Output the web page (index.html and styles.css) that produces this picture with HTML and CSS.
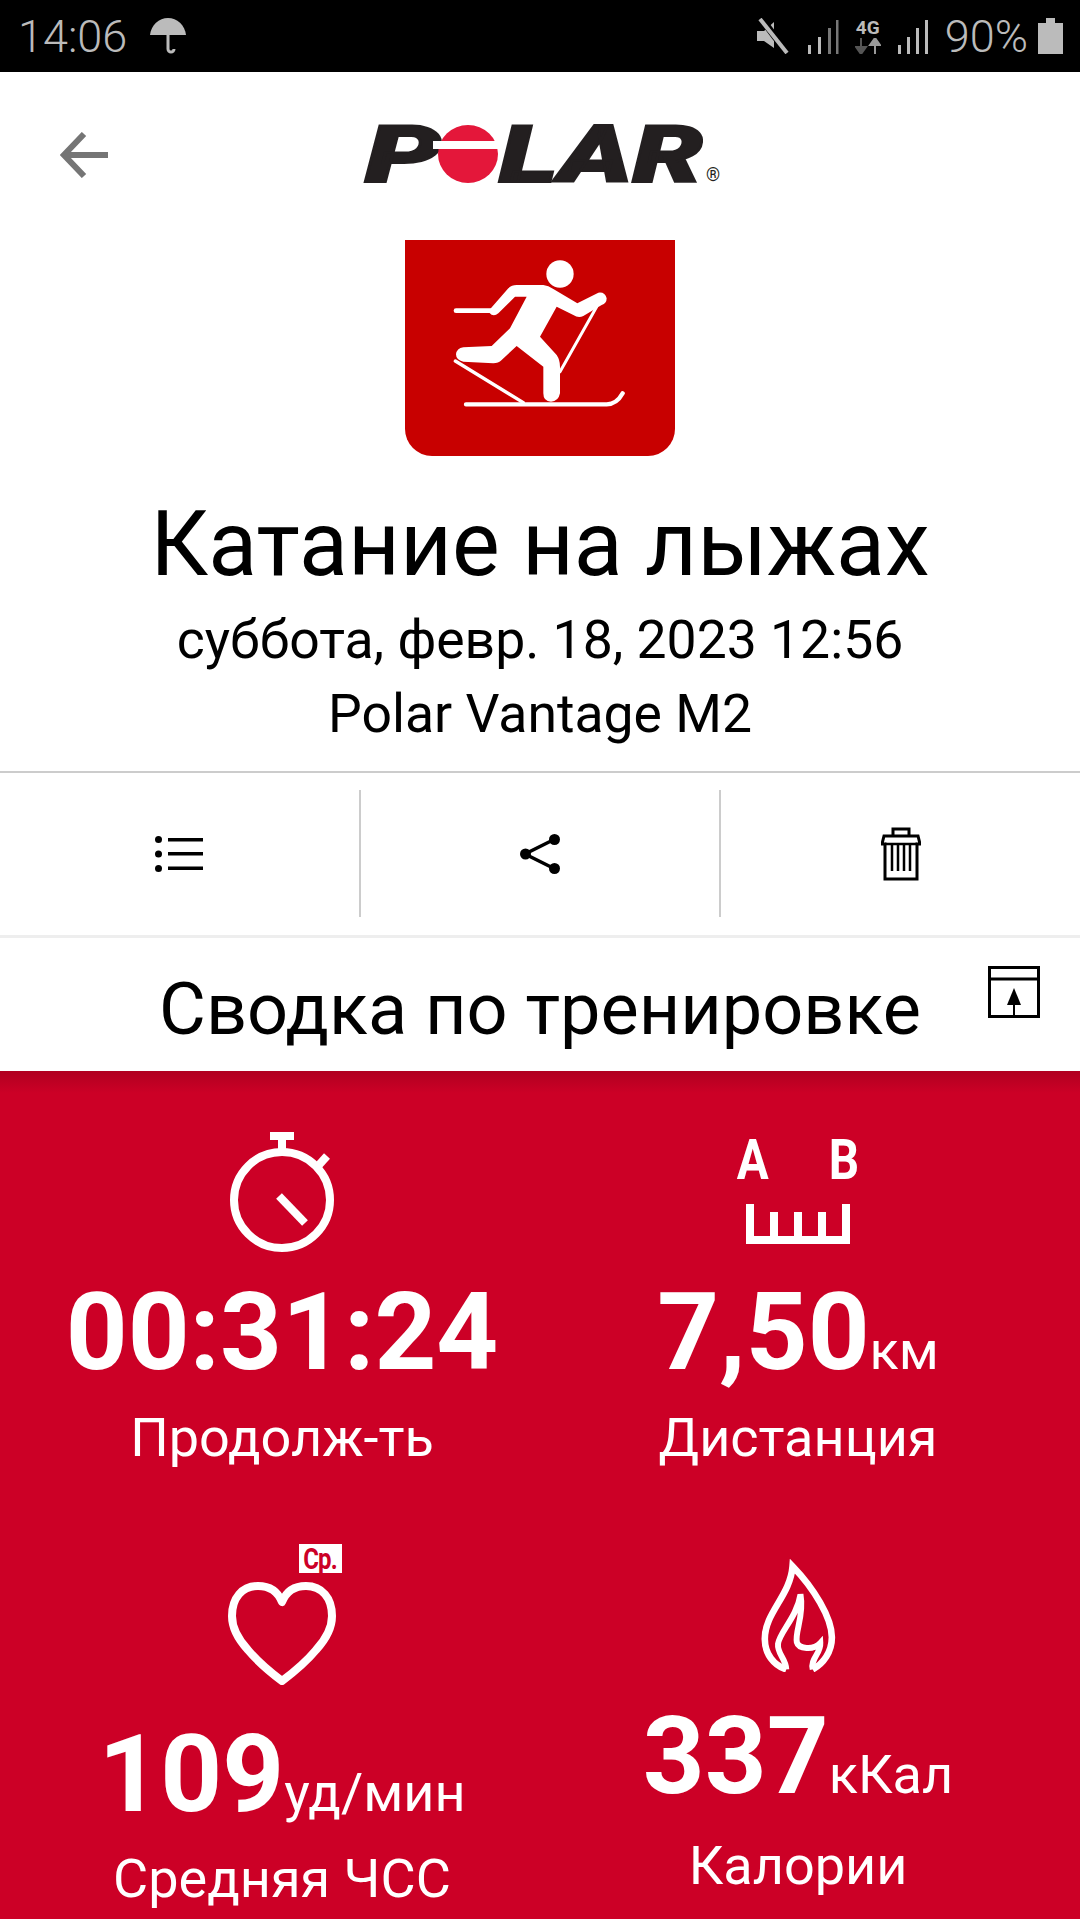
FILE: index.html
```html
<!DOCTYPE html>
<html lang="ru">
<head>
  <meta charset="UTF-8">
  <title>Polar Flow</title>
  <link rel="stylesheet" href="styles.css">
</head>
<body>
  <!--STATUS BAR-->
  <div class="statusbar">
    <div class="status-left">
      <span class="clock">14:06</span>
      <svg class="umbrella" width="36" height="36" viewBox="0 0 36 36">
        <path d="M0 17C1 7 9 0 18 0s17 7 18 17z" fill="#bbb"/>
        <path d="M18 15V31a3 3 0 0 0 6 0" fill="none" stroke="#bbb" stroke-width="3"/>
      </svg>
    </div>
    <div class="status-right">
      <svg width="34" height="36" viewBox="0 0 34 36">
        <path d="M0 13H7L17 4V30L7 23H0z" fill="#bbb"/>
        <path d="M4 0L31 36" stroke="#000" stroke-width="7"/>
        <path d="M3 1L30 35" stroke="#bbb" stroke-width="4"/>
      </svg>
      <svg class="signal" width="32" height="34" viewBox="0 0 32 34">
        <path d="M1 34V25h3v9zM11 34V17h3v17z" fill="#bbb"/>
        <path d="M21 34V8h3v26zM29 34V0h2.500v34z" fill="#777"/>
      </svg>
      <div class="net">
        <span class="net-label">4G</span>
        <svg width="26" height="16" viewBox="0 0 26 16">
          <path d="M6 0V10M1 9l5 7 5-7z" fill="#555" stroke="#555" stroke-width="2"/>
          <path d="M20 16V6M15 7l5-7 5 7z" fill="#999" stroke="#999" stroke-width="2"/>
        </svg>
      </div>
      <svg class="signal" width="32" height="34" viewBox="0 0 32 34">
        <path d="M1 34V25h3v9zM10 34V17h3v17zM19 34V8h3v26zM28 34V0h3v34z" fill="#bbb"/>
      </svg>
      <span class="battery-text">90%</span>
      <svg width="25" height="36" viewBox="0 0 25 36">
        <path d="M8 0h9v5h8v31H0V5h8z" fill="#bbb"/>
      </svg>
    </div>
  </div>

  <!--TOP OF THE PAGE-->
  <div class="topbar">
    <svg class="back" width="48" height="46" viewBox="0 0 48 46">
      <path d="M48 23H5M24 2L4 23l20 21" fill="none" stroke="#757575" stroke-width="6"/>
    </svg>
    <svg class="logo" width="362" height="100" viewBox="0 -20 362 100">
      <text class="logo-text" x="2" y="57" textLength="76" lengthAdjust="spacingAndGlyphs">P</text>
      <ellipse cx="105" cy="29" rx="30" ry="29" fill="#e4173a"/>
      <rect x="70" y="16" width="70" height="8" fill="#fff"/>
      <text class="logo-text" x="136" y="57" textLength="204" lengthAdjust="spacingAndGlyphs">LAR</text>
      <text class="logo-reg" x="343" y="56">®</text>
    </svg>
  </div>

  <div class="sport-icon">
    <svg width="270" height="216" viewBox="75 60 810 648">
      <path d="M330 268L385 205Q395 195 410 195L490 195Q505 197 520 207L592 250L655 218Q675 215 680 235Q680 250 665 255L610 288Q595 295 580 285L530 260L480 350L530 405Q540 420 540 440V520Q535 545 513 545Q490 545 490 520V440L410 378L365 420Q355 430 340 430L250 425Q228 420 228 403Q230 385 250 382L335 378L390 325L440 230H405L355 280Q340 292 328 278z" fill="#fff"/>
      <g fill="none" stroke="#fff" stroke-linecap="round">
        <path d="M228 272H335" stroke-width="14"/>
        <path d="M650 260L540 455" stroke-width="9"/>
        <path d="M258 553H680Q710 553 728 520" stroke-width="13"/>
        <path d="M226 423L430 548" stroke-width="10"/>
      </g>
      <circle cx="540" cy="162" r="41" fill="#fff"/>
    </svg>
  </div>

  <h1 class="title">Катание на лыжах</h1>
  <div class="subtitle">суббота, февр. 18, 2023 12:56</div>
  <div class="subtitle device">Polar Vantage M2</div>

  <!--ACTIONS-->
  <div class="actions">
    <div class="action">
      <svg width="48" height="36" viewBox="0 0 48 36">
        <g fill="#000">
          <circle cx="3.500" cy="3.500" r="3.500"/><circle cx="3.500" cy="18" r="3.500"/><circle cx="3.500" cy="32.500" r="3.500"/>
          <rect x="13" y="2" width="35" height="3.500"/><rect x="13" y="16" width="35" height="3.500"/><rect x="13" y="30.500" width="35" height="3.500"/>
        </g>
      </svg>
    </div>
    <div class="action">
      <svg width="40" height="40" viewBox="0 0 40 40">
        <path d="M35 5L5 20l30 15" fill="none" stroke="#000" stroke-width="3.500"/>
        <circle cx="34.500" cy="5.500" r="5.500"/><circle cx="5.500" cy="20" r="5.500"/><circle cx="34.500" cy="34.500" r="5.500"/>
      </svg>
    </div>
    <div class="action">
      <svg width="40" height="54" viewBox="0 0 40 54">
        <path d="M1 17L3 9H37L39 17H36V52H4V17zM12 9V2H28V9" fill="none" stroke="#000" stroke-width="3"/>
        <path d="M4 17H36M11 18V44M17 18V44M23 18V44M29 18V44" fill="none" stroke="#000" stroke-width="2.500"/>
      </svg>
    </div>
  </div>

  <div class="summary-head">
    <h2 class="summary-title">Сводка по тренировке</h2>
    <svg class="export" width="52" height="52" viewBox="0 0 52 52">
      <path d="M1.500 1.500H50.500V50.500H1.500zM1.500 13H50.500" fill="none" stroke="#000" stroke-width="3"/>
      <path d="M26 22L33 39H19z" fill="#000"/>
      <path d="M26 36V49" stroke="#000" stroke-width="2"/>
    </svg>
  </div>

  <!--RED STATS-->
  <div class="stats">
    <div class="stat">
      <svg class="stat-icon" width="112" height="120" viewBox="0 0 112 120">
        <g fill="none" stroke="#fff" stroke-width="8">
          <circle cx="56" cy="68" r="48"/>
          <path d="M56 20V4M44 4H68"/>
          <path d="M53 64L79 91"/>
          <path d="M92 34L101 24"/>
        </g>
      </svg>
      <div class="value">00:31:24</div>
      <div class="label">Продолж-ть</div>
    </div>
    <div class="stat">
      <div class="ab-row"><span>A</span><span>B</span></div>
      <svg class="ruler" width="104" height="40" viewBox="0 0 104 40">
        <path d="M4 0V36H100V0M28 8V36M52 8V36M76 8V36" fill="none" stroke="#fff" stroke-width="8"/>
      </svg>
      <div class="value">7,50<span class="unit">км</span></div>
      <div class="label">Дистанция</div>
    </div>
    <div class="stat stat-hr">
      <div class="heart-wrap">
        <svg width="108" height="104" viewBox="0 0 108 104">
          <path d="M54 20C50 10 42 4 30 4C14 4 4 16 4 34C4 44 9 56 20 68C30 80 42 90 54 99C66 90 78 80 88 68C99 56 104 44 104 34C104 16 94 4 78 4C66 4 58 10 54 20z" fill="none" stroke="#fff" stroke-width="8" stroke-linejoin="round"/>
        </svg>
        <span class="badge"><span>Ср.</span></span>
      </div>
      <div class="value">109<span class="unit">уд/мин</span></div>
      <div class="label">Средняя ЧСС</div>
    </div>
    <div class="stat stat-flame">
      <svg width="75" height="113" viewBox="57 28 226 342">
        <g fill="none" stroke="#fff">
          <path d="M133 362C95 350 68 315 68 270C68 190 145 140 152 50C215 115 271 205 271 265C271 310 245 345 213 362" stroke-width="20"/>
          <path d="M133 362C132 330 105 315 108 285C112 250 165 205 176 135C188 200 158 250 165 280C170 300 215 305 236 282C238 315 205 330 213 362" stroke-width="18"/>
        </g>
      </svg>
      <div class="value">337<span class="unit">кКал</span></div>
      <div class="label">Калории</div>
    </div>
  </div>
</body>
</html>
```

FILE: styles.css
```css
* {
  margin: 0;
  padding: 0;
  box-sizing: border-box;
}

html, body {
  height: 1920px;
  overflow: hidden;
}

body {
  font-family: Roboto, "Noto Sans", sans-serif;
  background-color: #fff;
  color: #000;
  text-align: center;
}

svg {
  display: block;
}

/* status bar */
.statusbar {
  height: 72px;
  background-color: #000;
  color: #bbb;
  display: flex;
  justify-content: space-between;
  align-items: center;
  padding: 0 17px 0 18px;
}

.status-left, .status-right {
  display: flex;
  align-items: center;
}

.clock {
  font-size: 45px;
  font-weight: 300;
}

.umbrella {
  margin-left: 23px;
}

.status-right {
  gap: 16px;
}

.status-right .signal {
  margin-top: 2px;
}

.net {
  width: 26px;
  display: flex;
  flex-direction: column;
  align-items: center;
}

.net-label {
  font-size: 19px;
  line-height: 20px;
  font-weight: 700;
}

.battery-text {
  font-size: 45px;
  font-weight: 300;
  margin-right: -6px;
}

/* logo row */
.topbar {
  display: grid;
  grid-template-columns: 1fr auto 1fr;
  align-items: center;
  height: 166px;
  padding-left: 60px;
}

.logo {
  margin-left: -52px;
}

.logo-text {
  font-family: Roboto, sans-serif;
  font-size: 80px;
  font-weight: 900;
  font-style: italic;
  fill: #231f20;
  stroke: #231f20;
  stroke-width: 2;
}

.logo-reg {
  font-family: Roboto, sans-serif;
  font-size: 18px;
  fill: #231f20;
}

.sport-icon {
  width: 270px;
  height: 216px;
  margin: 2px auto 0;
  background-color: #c80000;
  border-radius: 0 0 27px 27px;
}

.title {
  font-size: 90px;
  font-weight: 400;
  line-height: 108px;
  margin-top: 35px;
}

.subtitle {
  font-size: 53.5px;
  line-height: 72px;
  margin-top: 5px;
}

.device {
  margin-top: 2px;
}

/* action row */
.actions {
  display: flex;
  height: 167px;
  margin-top: 21px;
  padding: 17px 0 18px;
  border-top: 2px solid #ccc;
  border-bottom: 3px solid #eee;
}

.action {
  flex: 1;
  display: flex;
  justify-content: center;
  align-items: center;
  border-left: 2px solid #ccc;
}

.action:first-child {
  border-left: none;
}

.summary-head {
  display: grid;
  grid-template-columns: 1fr auto 1fr;
  align-items: center;
  height: 133px;
  padding-top: 10px;
}

.summary-title {
  font-size: 72px;
  font-weight: 400;
  grid-column: 2;
}

.export {
  justify-self: end;
  margin: -35px 40px 0 0;
}

/* red part */
.stats {
  height: 848px;
  background: linear-gradient(#b00020, #cc0026 22px);
  color: #fff;
  display: grid;
  grid-template-columns: 1fr 1fr;
  grid-template-rows: 427px auto;
  column-gap: 36px;
  padding: 61px 42px 0;
}

.stat {
  display: flex;
  flex-direction: column;
  align-items: center;
}

.value {
  font-size: 108px;
  font-weight: 700;
  line-height: 120px;
  white-space: nowrap;
  margin-top: 20px;
}

.unit {
  font-size: 54px;
  font-weight: 400;
  line-height: 1;
}

.label {
  font-size: 54px;
  line-height: 60px;
  margin-top: 16px;
}

.ab-row {
  width: 128px;
  height: 72px;
  padding: 8px 0 0;
  display: flex;
  justify-content: space-between;
  font-size: 56px;
  line-height: 40px;
  font-weight: 700;
}

.ab-row span {
  display: inline-block;
  transform: scaleX(.85);
}

.ruler {
  margin-bottom: 8px;
}

.heart-wrap {
  position: relative;
  width: 108px;
  margin-top: 23px;
}

.badge {
  position: absolute;
  top: -38px;
  right: -6px;
  width: 43px;
  height: 29px;
  background-color: #fff;
  color: #cc0026;
  font-size: 30px;
  line-height: 29px;
  font-weight: 700;
  letter-spacing: -1px;
}

.badge span {
  display: inline-block;
  transform: scaleX(.8);
}

.stat-hr .value {
  margin-top: 28px;
}

.stat-hr .label {
  margin-top: 15px;
}

.stat-flame .value {
  margin-top: 24px;
}

.stat-flame .label {
  margin-top: 20px;
}
```
